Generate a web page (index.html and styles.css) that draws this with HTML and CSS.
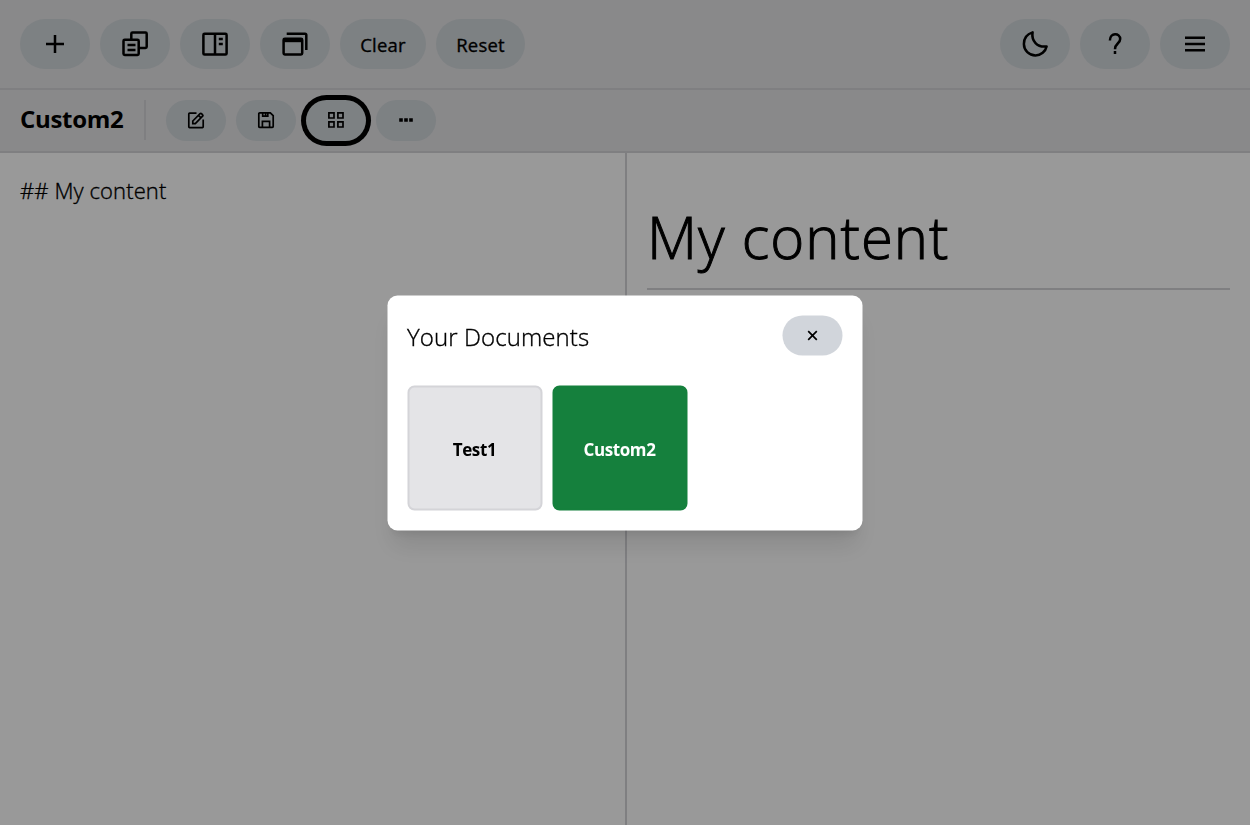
FILE: index.html
```html
<!DOCTYPE html>
<html lang="en">
<head>
<meta charset="utf-8">
<title>Markdown editor</title>
<link rel="stylesheet" href="styles.css">
</head>
<body>
<div class="app">
  <header class="toolbar">
    <button class="btn"><svg class="icon" viewBox="0 0 30 30"><path d="M15 6v18M6 15h18"/></svg></button>
    <button class="btn"><svg class="icon" viewBox="0 0 30 30"><rect x="3.5" y="10.8" width="15.2" height="15.2" rx="1.2"/><path d="M11.3 10.8V4.7q0-1.2 1.2-1.2h13q1.2 0 1.2 1.2v13q0 1.2-1.2 1.2h-6.5M7.5 16h8M7.5 21h8"/></svg></button>
    <button class="btn"><svg class="icon" viewBox="0 0 30 30"><rect x="3.4" y="4.8" width="23.2" height="20.8" rx="1.2"/><path d="M15 4.8v20.8M18.8 10h4M18.8 15h4"/></svg></button>
    <button class="btn"><svg class="icon" viewBox="0 0 30 30"><rect x="3.6" y="9.8" width="18.6" height="15.7" rx="1.2"/><path class="solid" d="M3 9h19.5v4.2H3z"/><path d="M6.7 4.7H25q1.3 0 1.3 1.3v15"/></svg></button>
    <button class="btn btn-clear"><span>Clear</span></button>
    <button class="btn btn-reset"><span>Reset</span></button>
    <div class="spacer"></div>
    <button class="btn"><svg class="icon moon" viewBox="0 0 30 30"><path d="M12.6 3.4C11.2 11.8 17.1 18.7 26.6 17.4C25.5 22.5 21 26.4 15.5 26.4C9.1 26.4 3.9 21.3 3.9 15C3.9 9.2 7.4 5 12.6 3.4Z"/></svg></button>
    <button class="btn"><svg class="icon" viewBox="0 0 30 30"><path d="M9.9 11.5C9.9 3.1 20.2 3.5 20.2 10.1C20.2 14.5 15 14.2 15 20.3M15 21.9v3"/></svg></button>
    <button class="btn"><svg class="icon menu" viewBox="0 0 30 30"><path d="M5 8.7h20M5 15h20M5 21.2h20"/></svg></button>
  </header>
  <div class="docbar">
    <h2 class="title"><span>Custom2</span></h2>
    <button class="btn small"><svg class="icon-s" viewBox="0 0 20 20"><path d="M10.5 3.2H3.6q-.8 0-.8.8v12.8q0 .8.8.8h12.8q.8 0 .8-.8V9.5M6.8 13.6V11l7.3-7.3q.7-.7 1.4 0l1.1 1.1q.7.7 0 1.4l-7.3 7.4zM12.5 5.3l2.5 2.5"/></svg></button>
    <button class="btn small"><svg class="icon-s" viewBox="0 0 20 20"><path d="M3.8 2.8h10.5l2.9 2.9v10.7q0 .9-.9.9H3.7q-.9 0-.9-.9V3.7q0-.9 1-.9zM6.4 17v-5.7h7.2V17M6.7 3v3.2h5.1V3M9.6 3v3"/></svg></button>
    <button class="btn small focused"><svg class="icon-s" viewBox="0 0 20 20"><path d="M2.9 2.9h5.1v5.1H2.9zM11.9 2.9H17v5.1h-5.1zM2.9 11.9h5.1V17H2.9zM11.9 11.9H17V17h-5.1z"/></svg></button>
    <button class="btn small"><svg class="icon-s" viewBox="0 0 20 20"><path class="solid" d="M3.2 8.2h3.6v3.6H3.2zM8.2 8.2h3.6v3.6H8.2zM13.2 8.2h3.6v3.6h-3.6z"/></svg></button>
  </div>
  <main class="panes">
    <section class="editor"><span>## My content</span></section>
    <section class="preview"><h1><span>My content</span></h1></section>
  </main>
</div>
<div class="overlay">
  <div class="modal">
    <div class="modal-head">
      <h3>Your Documents</h3>
      <button class="btn close"><svg class="icon-s" viewBox="0 0 20 20"><path d="M5.7 5.7l8.6 8.6M14.3 5.7l-8.6 8.6"/></svg></button>
    </div>
    <div class="docs">
      <div class="doc"><span>Test1</span></div>
      <div class="doc active"><span>Custom2</span></div>
    </div>
  </div>
</div>
</body>
</html>
```
FILE: styles.css
```css
* { box-sizing: border-box; }
body { margin: 0; font-family: "Open Sans", "Noto Sans", sans-serif; color: #000; overflow: hidden; }
h1, h2, h3 { margin: 0; }
.app { height: 825px; display: flex; flex-direction: column; background: #fff; }
.toolbar { height: 90px; flex: none; display: flex; align-items: center; gap: 10px; padding: 0 20px; background: #e4e4e7; border-bottom: 2px solid #d4d4d8; }
.btn { width: 70px; height: 50px; flex: none; display: flex; align-items: center; justify-content: center; padding: 0; border: 0; border-radius: 25px; background: #d1d7da; color: #000; font: 500 18.5px "Open Sans", "Noto Sans", sans-serif; letter-spacing: .2px; -webkit-text-stroke: .35px #000; }
.btn-clear { width: 86px; }
.btn-reset { width: 89px; }
.spacer { flex: 1; }
.icon { width: 30px; height: 30px; fill: none; stroke: #000; stroke-width: 2.5; }
.icon.menu { stroke-width: 2.4; }
.icon.moon { stroke-linejoin: round; }
.icon-s { width: 20px; height: 20px; fill: none; stroke: #000; stroke-width: 1.7; }
.icon .solid, .icon-s .solid { fill: #000; stroke: none; }
.docbar { height: 63px; flex: none; display: flex; align-items: center; gap: 10px; padding: 0 20px 1px; background: #e4e4e7; border-bottom: 2px solid #d4d4d8; }
.title { width: 126px; height: 40px; margin-right: 10px; border-right: 2px solid #d4d4d8; font-size: 24px; font-weight: 700; line-height: 38px; letter-spacing: -.3px; white-space: nowrap; }
.btn.small { width: 60px; height: 41px; border-radius: 21px; }
.btn.small .icon-s { margin-bottom: 1px; }
.btn.focused { box-shadow: 0 0 0 5px #000; }
.panes { flex: 1; display: flex; }
.editor { width: 627px; flex: none; padding: 19px 20px; border-right: 2px solid #d4d4d8; font-size: 22px; font-weight: 300; line-height: 36px; letter-spacing: .1px; -webkit-text-stroke: .35px #000; }
.preview { flex: 1; padding: 35px 20px 0; }
.preview h1 { height: 102px; border-bottom: 2px solid #d4d4d8; font-size: 58px; font-weight: 300; line-height: 98px; letter-spacing: 1px; white-space: nowrap; -webkit-text-stroke: 1px #000; }
.overlay { position: fixed; inset: 0; display: flex; align-items: center; justify-content: center; background: rgba(0, 0, 0, .4); }
.modal { width: 475px; height: 235px; padding: 20px; border-radius: 10px; background: #fff; box-shadow: 0 20px 25px -5px rgba(0, 0, 0, .1), 0 8px 10px -6px rgba(0, 0, 0, .1); transform: translate(-.5px, .5px); }
.modal-head { height: 70px; display: flex; justify-content: space-between; align-items: flex-start; }
.modal-head h3 { font-size: 24px; font-weight: 300; line-height: 41px; letter-spacing: .1px; white-space: nowrap; -webkit-text-stroke: .35px #000; }
.btn.close { width: 60px; height: 40px; border-radius: 20px; background: #d1d5db; }
.docs { display: flex; gap: 10px; }
.doc { width: 135px; height: 125px; display: flex; align-items: center; justify-content: center; padding-top: 1px; border: 2px solid #d4d4d8; border-radius: 7px; background: #e4e4e7; font-size: 17px; font-weight: 700; letter-spacing: -.4px; }
.doc.active { border-color: #15803d; background: #15803d; color: #fff; }
```
